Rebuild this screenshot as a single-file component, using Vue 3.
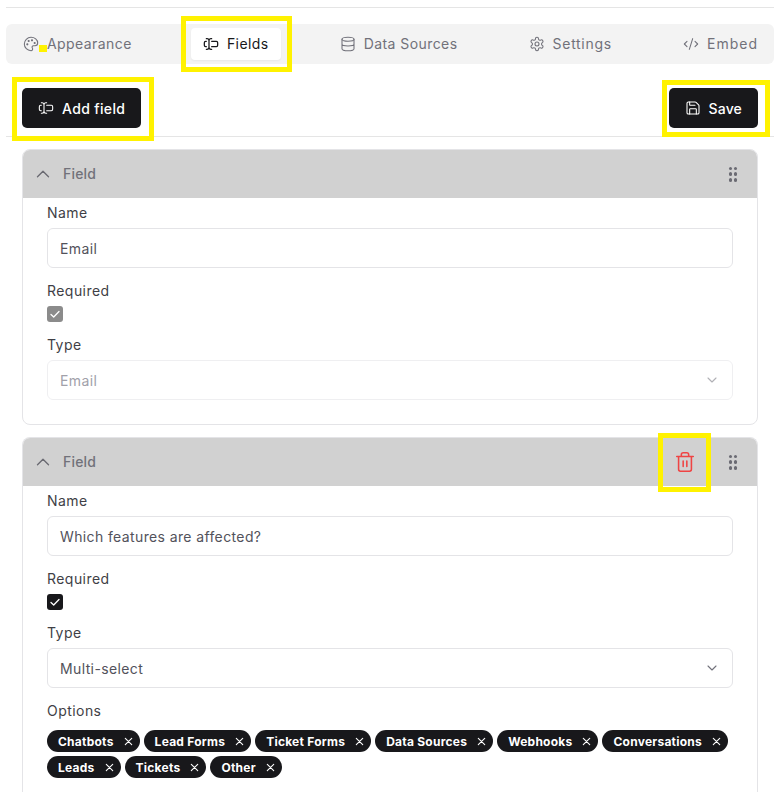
<script setup>
const tabs = [
  { label: 'Appearance', icon: 'palette' },
  { label: 'Fields', icon: 'field', active: true },
  { label: 'Data Sources', icon: 'db' },
  { label: 'Settings', icon: 'gear' },
  { label: 'Embed', icon: 'code' }
]
const options = ['Chatbots', 'Lead Forms', 'Ticket Forms', 'Data Sources', 'Webhooks', 'Conversations', 'Leads', 'Tickets', 'Other']
</script>

<template>
  <div class="page">
    <div class="topline"></div>
    <nav class="tabs">
      <div v-for="t in tabs" :key="t.label" class="tab" :class="[{ active: t.active }, 'tab-' + t.icon]">
        <svg class="ico" viewBox="0 0 24 24">
          <template v-if="t.icon === 'palette'">
            <path d="M12 2a10 10 0 1 0 0 20 2.500 2.500 0 0 0 2-4 2.200 2.200 0 0 1 1.700-3.500H18a4 4 0 0 0 4-4C22 5.500 17.500 2 12 2Z" />
            <circle class="dot" cx="13.500" cy="6.500" r=".8" /><circle class="dot" cx="17.500" cy="10.500" r=".8" /><circle class="dot" cx="8.500" cy="7.500" r=".8" /><circle class="dot" cx="6.500" cy="12.500" r=".8" />
          </template>
          <template v-else-if="t.icon === 'field'">
            <path d="M5 4h1a3 3 0 0 1 3 3 3 3 0 0 1 3-3h1M13 20h-1a3 3 0 0 1-3-3 3 3 0 0 1-3 3H5M5 16H4a2 2 0 0 1-2-2v-4a2 2 0 0 1 2-2h1M13 8h7a2 2 0 0 1 2 2v4a2 2 0 0 1-2 2h-7M9 7v10" />
          </template>
          <template v-else-if="t.icon === 'db'">
            <ellipse cx="12" cy="5" rx="9" ry="3" /><path d="M3 5v14c0 1.700 4 3 9 3s9-1.300 9-3V5M3 12c0 1.700 4 3 9 3s9-1.300 9-3" />
          </template>
          <template v-else-if="t.icon === 'gear'">
            <path d="M12.220 2h-.44a2 2 0 0 0-2 2v.18a2 2 0 0 1-1 1.730l-.43.25a2 2 0 0 1-2 0l-.15-.08a2 2 0 0 0-2.730.73l-.22.38a2 2 0 0 0 .73 2.730l.15.1a2 2 0 0 1 1 1.720v.51a2 2 0 0 1-1 1.740l-.15.09a2 2 0 0 0-.73 2.730l.22.38a2 2 0 0 0 2.730.73l.15-.08a2 2 0 0 1 2 0l.43.25a2 2 0 0 1 1 1.730V20a2 2 0 0 0 2 2h.44a2 2 0 0 0 2-2v-.18a2 2 0 0 1 1-1.730l.43-.25a2 2 0 0 1 2 0l.15.08a2 2 0 0 0 2.730-.73l.22-.39a2 2 0 0 0-.73-2.730l-.15-.08a2 2 0 0 1-1-1.740v-.5a2 2 0 0 1 1-1.740l.15-.09a2 2 0 0 0 .73-2.730l-.22-.38a2 2 0 0 0-2.730-.73l-.15.08a2 2 0 0 1-2 0l-.43-.25a2 2 0 0 1-1-1.730V4a2 2 0 0 0-2-2z" /><circle cx="12" cy="12" r="3" />
          </template>
          <template v-else>
            <path d="m18 16 4-4-4-4M6 8l-4 4 4 4M14.500 4l-5 16" />
          </template>
        </svg>
        <span class="tab-text">{{ t.label }}</span>
      </div>
    </nav>

    <div class="toolbar">
      <button class="btn">
        <svg class="ico" viewBox="0 0 24 24"><path d="M5 4h1a3 3 0 0 1 3 3 3 3 0 0 1 3-3h1M13 20h-1a3 3 0 0 1-3-3 3 3 0 0 1-3 3H5M5 16H4a2 2 0 0 1-2-2v-4a2 2 0 0 1 2-2h1M13 8h7a2 2 0 0 1 2 2v4a2 2 0 0 1-2 2h-7M9 7v10" /></svg>
        Add field
      </button>
      <button class="btn save">
        <svg class="ico" viewBox="0 0 24 24"><path d="M15.200 3a2 2 0 0 1 1.400.6l3.800 3.800a2 2 0 0 1 .6 1.400V19a2 2 0 0 1-2 2H5a2 2 0 0 1-2-2V5a2 2 0 0 1 2-2z" /><path d="M17 21v-7a1 1 0 0 0-1-1H8a1 1 0 0 0-1 1v7M7 3v4a1 1 0 0 0 1 1h7" /></svg>
        Save
      </button>
    </div>

    <div class="cards">
      <section class="card">
        <header class="head">
          <svg class="chev" viewBox="0 0 24 24"><path d="m6 15 6-6 6 6" /></svg>
          <span class="head-title">Field</span>
          <span class="grip"><i v-for="n in 6" :key="n"></i></span>
        </header>
        <div class="body">
          <label class="lbl">Name</label>
          <div class="input">Email</div>
          <label class="lbl l2">Required</label>
          <span class="check off"><svg viewBox="0 0 16 16"><path d="m4 8.500 2.700 2.500L12 5.500" /></svg></span>
          <label class="lbl l2">Type</label>
          <div class="input select disabled">Email
            <svg class="down" viewBox="0 0 24 24"><path d="m6 9 6 6 6-6" /></svg>
          </div>
        </div>
      </section>

      <section class="card last">
        <header class="head">
          <svg class="chev" viewBox="0 0 24 24"><path d="m6 15 6-6 6 6" /></svg>
          <span class="head-title">Field</span>
          <svg class="trash" viewBox="0 0 24 24"><path d="M3 6h18M19 6v14a2 2 0 0 1-2 2H7a2 2 0 0 1-2-2V6M8 6V4a2 2 0 0 1 2-2h4a2 2 0 0 1 2 2v2M10 11v6M14 11v6" /></svg>
          <span class="grip"><i v-for="n in 6" :key="n"></i></span>
        </header>
        <div class="body">
          <label class="lbl">Name</label>
          <div class="input">Which features are affected?</div>
          <label class="lbl l2">Required</label>
          <span class="check"><svg viewBox="0 0 16 16"><path d="m4 8.500 2.700 2.500L12 5.500" /></svg></span>
          <label class="lbl l2">Type</label>
          <div class="input select">Multi-select
            <svg class="down" viewBox="0 0 24 24"><path d="m6 9 6 6 6-6" /></svg>
          </div>
          <label class="lbl l2">Options</label>
          <div class="chips">
            <span v-for="o in options" :key="o" class="chip">{{ o }}
              <svg viewBox="0 0 12 12"><path d="m2.500 2.500 7 7M9.500 2.500l-7 7" /></svg>
            </span>
          </div>
        </div>
      </section>
    </div>

    <div class="hl hl-fields"></div>
    <div class="hl hl-add"></div>
    <div class="hl hl-save"></div>
    <div class="hl hl-trash"></div>
    <div class="hl-dot"></div>
  </div>
</template>

<style>
html, body { margin: 0; background: #fff; overflow: hidden; }
</style>

<style scoped>
.page {
  position: relative;
  width: 782px;
  height: 792px;
  overflow: hidden;
  background: #fff;
  font-family: Inter, "Open Sans", "Liberation Sans", sans-serif;
  font-size: 14px;
  color: #27272a;
  box-sizing: border-box;
  padding: 7px 8px 0 6px;
}
.topline { height: 1px; background: #e5e5e5; }
.tabs {
  display: flex;
  justify-content: space-between;
  margin-top: 16px;
  height: 40px;
  box-sizing: border-box;
  padding: 4px 4px 4px 5px;
  background: #f3f3f3;
  border-radius: 6px;
}
.tab {
  display: flex;
  align-items: center;
  gap: 8px;
  padding: 0 12px;
  color: #71717a;
  letter-spacing: .42px;
  border-radius: 4px;
}
.tab-text { position: relative; top: -1px; }
.tab-gear span { letter-spacing: .7px; }
.tab-code span { letter-spacing: 1px; }
.tab.active { background: #fff; color: #18181b; box-shadow: 0 1px 2px rgba(0,0,0,.05); }
.tab.active .ico { stroke-width: 1.900; }
.ico { width: 16px; height: 16px; fill: none; stroke: currentColor; stroke-width: 1.600; stroke-linecap: round; stroke-linejoin: round; flex: none; }
.dot { fill: currentColor; }
.toolbar {
  display: flex;
  justify-content: space-between;
  align-items: flex-start;
  height: 73px;
  padding: 24px 16px 0 16px;
  border-bottom: 1px solid #e5e5e5;
  box-sizing: border-box;
}
.btn {
  display: flex;
  align-items: center;
  gap: 8px;
  height: 40px;
  padding: 0 16px;
  border: 0;
  border-radius: 5px;
  background: #18181b;
  color: #fff;
  font: 500 14px Inter, "Liberation Sans", sans-serif;
  letter-spacing: .35px;
}
.btn.save { letter-spacing: .15px; }
.cards { padding: 12px 16px 0 16px; display: flex; flex-direction: column; gap: 12px; }
.card {
  border: 1px solid #e4e4e7;
  border-radius: 8px;
  height: 276px;
  box-sizing: border-box;
  overflow: hidden;
}
.card.last { height: auto; border-bottom: 0; border-radius: 8px 8px 0 0; }
.head {
  display: flex;
  align-items: center;
  height: 48px;
  padding: 0 16px 0 9px;
  background: #d1d1d1;
}
.chev { width: 22px; height: 22px; flex: none; fill: none; stroke: #6b6b73; stroke-width: 1.500; stroke-linecap: round; stroke-linejoin: round; }
.head-title { position: relative; top: -1px; margin-left: 9px; font-weight: 500; color: #71717a; letter-spacing: .2px; flex: 1; }
.trash { width: 22px; height: 22px; margin-right: 33px; fill: none; stroke: #ef4444; stroke-width: 1.700; stroke-linecap: round; stroke-linejoin: round; }
.grip { display: grid; grid-template-columns: 3.500px 3.500px; gap: 2.250px 1.500px; margin-right: 4px; }
.grip i { width: 3.500px; height: 3.500px; border-radius: 50%; background: #6b6b73; }
.body { padding: 5px 24px 40px 24px; }
.lbl { display: block; height: 20px; line-height: 20px; letter-spacing: .45px; color: #3f3f46; }
.l2 { margin-top: 13px; }
.input {
  position: relative;
  display: flex;
  align-items: center;
  height: 40px;
  margin-top: 5px;
  padding: 0 12px;
  border: 1px solid #e4e4e7;
  border-radius: 6px;
  box-sizing: border-box;
  color: #52525b;
  letter-spacing: .38px;
}
.select { justify-content: space-between; }
.disabled { color: #a1a1aa; border-color: #efeff1; }
.disabled .down { opacity: .55; }
.down { width: 16px; height: 16px; fill: none; stroke: #71717a; stroke-width: 1.600; stroke-linecap: round; stroke-linejoin: round; }
.check {
  display: block;
  width: 16px;
  height: 16px;
  margin-top: 5px;
  border-radius: 3px;
  background: #18181b;
}
.check svg { display: block; width: 16px; height: 16px; fill: none; stroke: #fff; stroke-width: 1.300; stroke-linecap: round; stroke-linejoin: round; }
.check.off { background: #8b8b8b; }
.chips { display: flex; flex-wrap: wrap; gap: 4px; margin-top: 9px; }
.chip {
  display: flex;
  align-items: center;
  gap: 9px;
  height: 22px;
  padding: 0 6px 0 11px;
  border-radius: 11px;
  background: #18181b;
  color: #fff;
  font-size: 12px;
  font-weight: 700;
  letter-spacing: .24px;
}
.chip svg { width: 11px; height: 11px; fill: none; stroke: #fff; stroke-width: 1.200; stroke-linecap: round; }
.hl { position: absolute; border: 5px solid #fff200; box-sizing: border-box; pointer-events: none; }
.hl-fields { left: 181px; top: 16px; width: 111px; height: 56px; }
.hl-add { left: 12px; top: 77px; width: 142px; height: 64px; }
.hl-save { left: 662px; top: 80px; width: 108px; height: 57px; }
.hl-trash { left: 658px; top: 433px; width: 53px; height: 59px; }
.hl-dot { position: absolute; left: 39px; top: 45px; width: 8px; height: 7px; background: #fff200; }
</style>
